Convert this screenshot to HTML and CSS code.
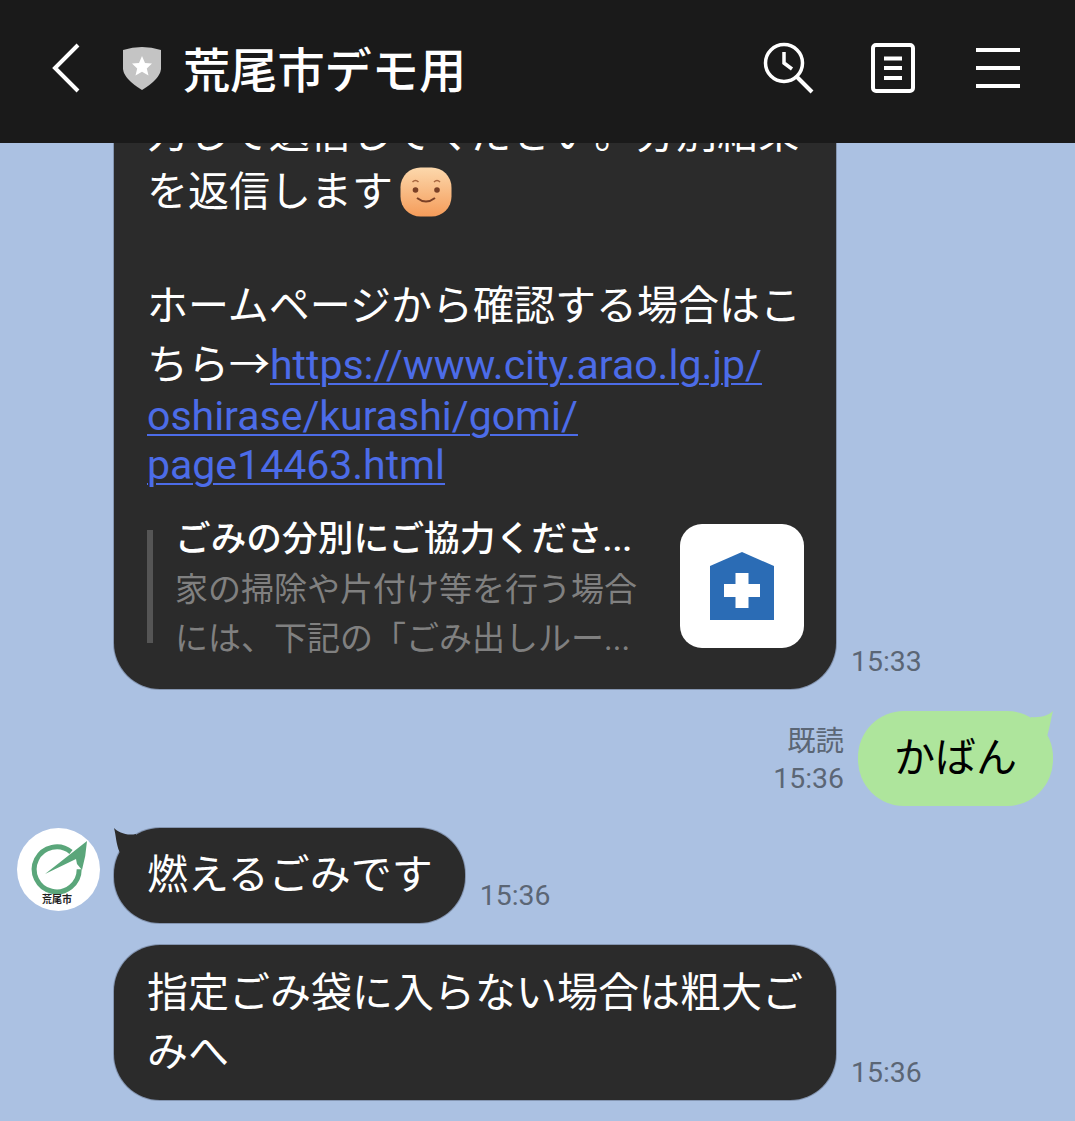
FILE: index.html
```html
<!DOCTYPE html>
<html lang="ja">
<head>
    <meta charset="UTF-8">
    <meta name="viewport" content="width=device-width, initial-scale=1.0">
    <title>荒尾市デモ用</title>
    <link rel="stylesheet" href="styles.css">
</head>
<body>

<div class="screen">
    <!-- Top bar -->
    <header class="topbar">
        <svg class="icon-back" width="28" height="50" viewBox="0 0 28 50">
            <path d="M26 2 L3 25 L26 48" fill="none" stroke="#fff" stroke-width="4"/>
        </svg>
        <svg class="icon-shield" width="40" height="46" viewBox="0 0 40 46">
            <path d="M1 5 Q20 -1 39 5 L39 24 Q38 34 20 45 Q2 34 1 24 Z" fill="#c4c4c4"/>
            <path d="M20 11 L23 18 L30 18.500 L24.800 23.500 L26.500 30.500 L20 26.800 L13.500 30.500 L15.200 23.500 L10 18.500 L17 18 Z" fill="#fff"/>
        </svg>
        <div class="room-name">荒尾市デモ用</div>
        <div class="topbar-icons">
            <svg width="52" height="52" viewBox="0 0 52 52">
                <circle cx="21" cy="21" r="18.500" fill="none" stroke="#fff" stroke-width="3.500"/>
                <path d="M21 10 V21 L29 27" fill="none" stroke="#fff" stroke-width="3.500"/>
                <path d="M33 34 L49 50" fill="none" stroke="#fff" stroke-width="4"/>
            </svg>
            <svg class="icon-notes" width="44" height="50" viewBox="0 0 44 50">
                <rect x="2" y="2" width="40" height="46" rx="3" fill="none" stroke="#fff" stroke-width="4"/>
                <path d="M13 15.500 H31 M13 25 H31 M13 35 H31" stroke="#fff" stroke-width="4"/>
            </svg>
            <svg class="icon-menu" width="44" height="40" viewBox="0 0 44 40">
                <path d="M0 2 H44 M0 20 H44 M0 38 H44" stroke="#fff" stroke-width="4"/>
            </svg>
        </div>
    </header>

    <!-- Messages, anchored to the bottom like a real chat -->
    <main class="chat">
        <div class="row">
            <div class="avatar-slot"></div>
            <div class="bubble bubble-wide">
                <div class="line">力して送信してください。分別結果</div>
                <div class="line">を返信します<svg class="emoji" width="52" height="50" viewBox="0 0 52 50">
                    <defs>
                        <linearGradient id="face" x1="0" y1="0" x2="0" y2="1">
                            <stop offset="0" stop-color="#fcd8ac"/>
                            <stop offset="1" stop-color="#f59c5a"/>
                        </linearGradient>
                    </defs>
                    <rect x="0.500" y="0.500" width="51" height="49" rx="20" fill="url(#face)"/>
                    <circle cx="15.500" cy="23" r="2.800" fill="#7a4026"/>
                    <circle cx="37" cy="23" r="2.800" fill="#7a4026"/>
                    <path d="M12.500 15 Q15.500 12 18.500 15 M34 15 Q37 12 40 15" fill="none" stroke="#a8663f" stroke-width="1.500"/>
                    <path d="M17 31 Q26 38 35 31" fill="none" stroke="#7a4026" stroke-width="2"/>
                </svg></div>
                <div class="line line-blank">&nbsp;</div>
                <div class="line">ホームページから確認する場合はこ</div>
                <div class="line line-mixed">ちら→<a class="link" href="#">https://www.city.arao.lg.jp/</a></div>
                <div class="line line-link"><a class="link" href="#">oshirase/kurashi/gomi/</a></div>
                <div class="line line-link"><a class="link" href="#">page14463.html</a></div>

                <div class="preview">
                    <div class="preview-bar"></div>
                    <div class="preview-text">
                        <div class="preview-title">ごみの分別にご協力くださ...</div>
                        <div class="preview-desc">家の掃除や片付け等を行う場合</div>
                        <div class="preview-desc">には、下記の「ごみ出しルー...</div>
                    </div>
                    <div class="preview-thumb">
                        <svg width="64" height="68" viewBox="0 0 64 68">
                            <path d="M0 14 L32 0 L64 14 V68 H0 Z" fill="#2b6cb5"/>
                            <path d="M25.500 21 H38.500 V32 H50 V45 H38.500 V56 H25.500 V45 H14 V32 H25.500 Z" fill="#fff"/>
                        </svg>
                    </div>
                </div>
            </div>
            <div class="meta">15:33</div>
        </div>

        <div class="row row-out">
            <div class="meta meta-out">既読<br>15:36</div>
            <div class="bubble bubble-green">
                かばん
                <svg class="tail tail-out" width="22" height="24" viewBox="0 0 22 24">
                    <path d="M22 0 C18 4 10 7 0 6 L0 24 L16.400 24 C19 16 20 7 22 0 Z" fill="#aee59c"/>
                </svg>
            </div>
        </div>

        <div class="row">
            <div class="avatar-slot">
                <svg class="avatar" width="83" height="83" viewBox="0 0 83 83">
                    <circle cx="41.500" cy="41.500" r="41.500" fill="#fff"/>
                    <path d="M54 24 A22.500 22.500 0 1 0 62.200 41.300" fill="none" stroke="#5aa67a" stroke-width="5"/>
                    <path d="M28 46 L70 13 Q69 28 65 42 L60 36 L59 31 Z" fill="#5aa67a"/>
                    <text class="avatar-name" x="40" y="75" text-anchor="middle">荒尾市</text>
                </svg>
            </div>
            <div class="bubble">
                燃えるごみです
                <svg class="tail tail-in" width="22" height="24" viewBox="0 0 22 24">
                    <path d="M0 0 C4 4 12 8 22 6 L22 24 L5.600 24 C2 16 2 7 0 0 Z" fill="#2b2b2b"/>
                </svg>
            </div>
            <div class="meta">15:36</div>
        </div>

        <div class="row">
            <div class="avatar-slot"></div>
            <div class="bubble bubble-wide bubble-loose">
                <div class="line line-loose">指定ごみ袋に入らない場合は粗大ご</div>
                <div class="line line-loose">みへ</div>
            </div>
            <div class="meta">15:36</div>
        </div>
    </main>
</div>

</body>
</html>
```

FILE: styles.css
```css
body {
    margin: 0;
    font-family: Roboto, "Noto Sans CJK JP", sans-serif;
    color: #fff;
}

.screen {
    display: flex;
    flex-direction: column;
    height: 1121px;
    overflow: hidden;
    background-color: #abc1e2;
}

/* Top bar */
.topbar {
    display: flex;
    align-items: center;
    flex-shrink: 0;
    height: 143px;
    padding: 0 55px 8px 52px;
    box-sizing: border-box;
    background-color: #1a1a1a;
}

.icon-back {
    margin-right: 42px;
}

.icon-shield {
    margin-right: 21px;
}

.room-name {
    font-size: 47.2px;
    font-weight: 500;
    font-family: "Noto Sans CJK JP", sans-serif;
    line-height: 1;
    flex: 1;
}

.topbar-icons {
    display: flex;
    align-items: center;
}

.icon-notes {
    margin-left: 56px;
}

.icon-menu {
    margin-left: 61px;
}

/* Messages */
.chat {
    flex: 1;
    min-height: 0;
    display: flex;
    flex-direction: column;
    justify-content: flex-end;
    gap: 22px;
    padding: 0 22px 21px 17px;
    overflow: hidden;
}

.row {
    display: flex;
    align-items: flex-end;
    flex-shrink: 0;
}

.row-out {
    justify-content: flex-end;
}

.avatar-slot {
    align-self: flex-start;
    width: 83px;
    margin-right: 14px;
    flex-shrink: 0;
}

.avatar {
    display: block;
}

.avatar-name {
    font-size: 10px;
    font-weight: 700;
    fill: #222;
    font-family: "Noto Sans CJK JP", sans-serif;
}

.bubble {
    position: relative;
    padding: 18px 32px 18px 33px;
    border-radius: 46px;
    background-color: #2b2b2b;
    font-size: 41px;
    line-height: 59px;
    box-shadow: 0 0 0 1px rgba(60, 70, 85, 0.35);
}

.bubble-wide {
    width: 722px;
    box-sizing: border-box;
}

.bubble-loose {
    padding-top: 18.5px;
    padding-bottom: 18.5px;
}

.bubble-green {
    padding: 18px 36px;
    background-color: #aee59c;
    color: #000;
    box-shadow: none;
}

.line {
    height: 58px;
    line-height: 58px;
    white-space: nowrap;
}

.line-blank {
    height: 56px;
}

.line-loose {
    height: 59px;
    line-height: 59px;
}

.line-mixed {
    height: 57px;
    line-height: 60px;
}

.line-link {
    height: 49px;
    line-height: 49px;
}

.link {
    color: #4c6ce8;
    text-decoration: underline;
    text-decoration-thickness: 2px;
    text-underline-offset: 4px;
}

.emoji {
    vertical-align: -11px;
    margin-left: 7px;
}

.tail {
    position: absolute;
    top: 0;
}

.tail-in {
    left: 0;
}

.tail-out {
    right: 0;
}

.meta {
    margin: 0 0 9px 15px;
    font-size: 28.4px;
    line-height: 37px;
    color: #5b6675;
}

.meta-out {
    margin: 0 14px 9px 0;
    text-align: right;
}

/* Link preview card */
.preview {
    display: flex;
    align-items: center;
    height: 124px;
    margin-top: 34px;
    margin-bottom: 23px;
}

.preview-bar {
    width: 6px;
    height: 113px;
    margin-right: 22px;
    background-color: #555;
}

.preview-text {
    flex: 1;
    min-width: 0;
    padding-top: 7px;
    font-size: 33px;
    line-height: 49.500px;
    white-space: nowrap;
}

.preview-title {
    font-size: 35.7px;
    font-weight: 500;
}

.preview-desc {
    color: #808080;
}

.preview-thumb {
    display: flex;
    align-items: center;
    justify-content: center;
    flex-shrink: 0;
    width: 124px;
    height: 124px;
    border-radius: 22px;
    background-color: #fff;
}
```
